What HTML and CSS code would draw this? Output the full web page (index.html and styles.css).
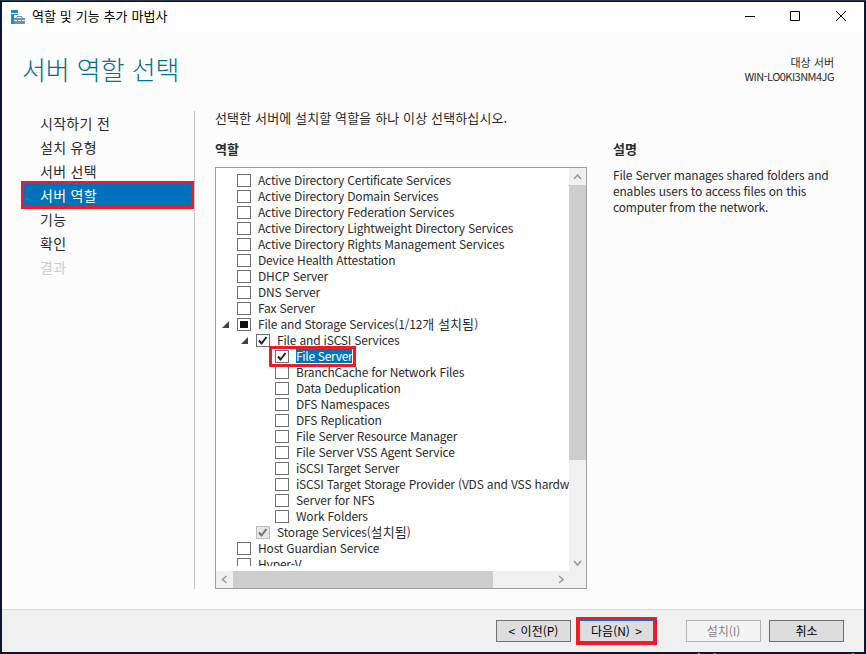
FILE: index.html
```html
<!DOCTYPE html>
<html lang="ko">
<head>
    <meta charset="UTF-8">
    <title>역할 및 기능 추가 마법사</title>
    <link rel="stylesheet" href="styles.css">
</head>
<body>
    <div class="desktop-mark">Windows Server 2016 Standard</div>
    <div class="window">
        <div class="titlebar">
            <svg class="app-icon" width="15" height="14" viewBox="0 0 15 14">
                <path fill="#1f8ad6" d="M0 0h7v3H0zM0 4h7v1H3v9H0z"/>
                <path fill="#7391a5" d="M3 8h11v6H3z"/>
                <path fill="none" stroke="#7391a5" d="M6 8V6.500h5V8"/>
                <path fill="none" stroke="#e4edf3" d="M3 10.500h3M7 10.500h3M11 10.500h3"/>
            </svg>
            <span class="caption">역할 및 기능 추가 마법사</span>
            <svg class="controls" width="102" height="12" viewBox="0 0 102 12" fill="none" stroke="#000">
                <path d="M0 6.500h10M45.500 1.500h9v9h-9z"/>
                <path d="M91 1l10 10M101 1L91 11"/>
            </svg>
        </div>

        <div class="header">
            <h1>서버 역할 선택</h1>
            <div class="target">
                <div>대상 서버</div>
                <div class="host">WIN-LO0KI3NM4JG</div>
            </div>
        </div>

        <div class="content">
            <ul class="steps">
                <li>시작하기 전</li>
                <li>설치 유형</li>
                <li>서버 선택</li>
                <li class="active">서버 역할</li>
                <li>기능</li>
                <li>확인</li>
                <li class="disabled">결과</li>
            </ul>

            <div class="roles">
                <p class="intro">선택한 서버에 설치할 역할을 하나 이상 선택하십시오.</p>
                <h2>역할</h2>
                <div class="listbox">
                    <div class="tree">
                        <div class="row"><i class="check"></i><span>Active Directory Certificate Services</span></div>
                        <div class="row"><i class="check"></i><span>Active Directory Domain Services</span></div>
                        <div class="row"><i class="check"></i><span>Active Directory Federation Services</span></div>
                        <div class="row"><i class="check"></i><span>Active Directory Lightweight Directory Services</span></div>
                        <div class="row"><i class="check"></i><span>Active Directory Rights Management Services</span></div>
                        <div class="row"><i class="check"></i><span>Device Health Attestation</span></div>
                        <div class="row"><i class="check"></i><span>DHCP Server</span></div>
                        <div class="row"><i class="check"></i><span>DNS Server</span></div>
                        <div class="row"><i class="check"></i><span>Fax Server</span></div>
                        <div class="row open"><i class="check partial"></i><span>File and Storage Services(1/12<b>개 설치됨</b>)</span></div>
                        <div class="row level2 open"><i class="check"><svg width="12" height="11" viewBox="0 0 12 11"><path d="M2 5.500l2.500 3L9.500 2"/></svg></i><span>File and iSCSI Services</span></div>
                        <div class="row level3 marked"><i class="check"><svg width="12" height="11" viewBox="0 0 12 11"><path d="M2 5.500l2.500 3L9.500 2"/></svg></i><span class="selected">File Server</span></div>
                        <div class="row level3"><i class="check"></i><span>BranchCache for Network Files</span></div>
                        <div class="row level3"><i class="check"></i><span>Data Deduplication</span></div>
                        <div class="row level3"><i class="check"></i><span>DFS Namespaces</span></div>
                        <div class="row level3"><i class="check"></i><span>DFS Replication</span></div>
                        <div class="row level3"><i class="check"></i><span>File Server Resource Manager</span></div>
                        <div class="row level3"><i class="check"></i><span>File Server VSS Agent Service</span></div>
                        <div class="row level3"><i class="check"></i><span>iSCSI Target Server</span></div>
                        <div class="row level3"><i class="check"></i><span>iSCSI Target Storage Provider (VDS and VSS hardware providers)</span></div>
                        <div class="row level3"><i class="check"></i><span>Server for NFS</span></div>
                        <div class="row level3"><i class="check"></i><span>Work Folders</span></div>
                        <div class="row level2"><i class="check locked"><svg width="12" height="11" viewBox="0 0 12 11"><path d="M2 5.500l2.500 3L9.500 2"/></svg></i><span>Storage Services(<b>설치됨</b>)</span></div>
                        <div class="row"><i class="check"></i><span>Host Guardian Service</span></div>
                        <div class="row"><i class="check"></i><span>Hyper-V</span></div>
                    </div>
                    <div class="vscroll">
                        <svg width="17" height="17" viewBox="0 0 17 17"><path d="M5 11l3.500-4 3.500 4"/></svg>
                        <div class="thumb"></div>
                        <svg width="17" height="17" viewBox="0 0 17 17"><path d="M5 7l3.500 4L12 7"/></svg>
                    </div>
                    <div class="hscroll">
                        <svg width="17" height="17" viewBox="0 0 17 17"><path d="M10.500 5l-4 3.500 4 3.500"/></svg>
                        <div class="thumb"></div>
                        <svg width="17" height="17" viewBox="0 0 17 17"><path d="M7 5l4 3.500L7 12"/></svg>
                    </div>
                    <div class="corner"></div>
                </div>
            </div>

            <div class="description">
                <h2>설명</h2>
                <p>File Server manages shared folders and<br>enables users to access files on this<br>computer from the network.</p>
            </div>
        </div>

        <div class="footer">
            <button>&lt; 이전(P)</button>
            <button class="next">다음(N) &gt;</button>
            <button class="install" disabled>설치(I)</button>
            <button>취소</button>
        </div>
    </div>
</body>
</html>
```

FILE: styles.css
```css
*, *::before, *::after {
    box-sizing: border-box;
}
body {
    margin: 0;
    width: 866px;
    height: 654px;
    padding: 1px 2px 2px;
    overflow: hidden;
    position: relative;
    background-color: #06182f;
    color: #2a2a2a;
    font-family: "Noto Sans CJK KR", sans-serif;
    font-size: 12px;
    border-top: 1px solid #26354c;
}
h1, h2, p, ul {
    margin: 0;
    padding: 0;
}
.desktop-mark {
    position: absolute;
    left: 686px;
    top: 649px;
    color: #fff;
    line-height: 16px;
    letter-spacing: 0.5px;
    white-space: nowrap;
}
.window {
    position: relative;
    width: 862px;
    height: 650px;
    display: flex;
    flex-direction: column;
    background-color: #fcfcfc;
}
.titlebar {
    height: 30px;
    padding: 0 17px 0 9px;
    display: flex;
    align-items: center;
    background-color: #fff;
    color: #000;
}
.app-icon {
    margin-top: -1px;
}
.caption {
    margin: -3px 0 0 6px;
    flex: 1;
    font-size: 13px;
    letter-spacing: 0.1px;
}
.controls {
    margin-top: -2px;
}
.header {
    height: 76px;
    display: flex;
    justify-content: space-between;
    padding: 0 30px 0 20px;
}
h1 {
    margin-top: 17px;
    color: #00708f;
    font-size: 26px;
    line-height: 40px;
    font-weight: 300;
    letter-spacing: -0.1px;
}
.target {
    margin-top: 23px;
    text-align: right;
    font-size: 11px;
    line-height: 14px;
}
.host {
    letter-spacing: -0.53px;
}
.content {
    height: 501px;
    display: flex;
}
.steps {
    width: 193px;
    height: 478px;
    margin-top: 3px;
    border-right: 1px solid #c6c6c6;
    list-style: none;
    font-size: 14px;
    line-height: 24px;
    letter-spacing: 0.3px;
}
.steps li {
    height: 24px;
    padding-left: 38px;
}
.steps .active {
    position: relative;
    z-index: 1;
    width: 173px;
    height: 28px;
    margin: -2px 0 -2px 19px;
    padding-left: 16px;
    border: 3px solid #ed1c24;
    background-color: #0072bc;
    color: #fff;
    line-height: 22px;
}
.steps .disabled {
    color: #ccc;
}
.roles {
    width: 372px;
    margin-left: 20px;
}
.intro {
    font-size: 13px;
    line-height: 20px;
    letter-spacing: 0.13px;
}
h2 {
    font-size: 13px;
    line-height: 20px;
    font-weight: 700;
}
.roles h2 {
    margin-top: 11px;
    margin-bottom: 8px;
}
.listbox {
    height: 422px;
    border: 1px solid #a0a0a0;
    display: grid;
    grid-template-columns: 353px 17px;
    grid-template-rows: 403px 17px;
    background-color: #fff;
}
.tree {
    height: 398px;
    padding-top: 4px;
    overflow: hidden;
    letter-spacing: -0.18px;
}
.row {
    position: relative;
    height: 16px;
    padding-left: 21px;
    display: flex;
    align-items: center;
    line-height: 16px;
    white-space: nowrap;
}
.row span {
    margin-left: 7px;
}
.row b {
    font-size: 13px;
    font-weight: 400;
    line-height: 1;
    letter-spacing: 0.1px;
}
.level2 {
    padding-left: 40px;
}
.level3 {
    padding-left: 59px;
}
.check {
    flex: none;
    width: 14px;
    height: 13px;
    border: 1px solid #707070;
    background-color: #fff;
    display: flex;
}
.check path {
    fill: none;
    stroke: #212121;
    stroke-width: 2;
}
.partial {
    padding: 2px;
    background-color: #111;
    background-clip: content-box;
}
.locked {
    border-color: #bcbcbc;
    background-color: #e6e6e6;
}
.locked path {
    stroke: #707070;
}
/* expander triangle */
.open::before {
    content: "";
    position: absolute;
    left: 6px;
    top: 5px;
    width: 7px;
    height: 7px;
    background-color: #444;
    clip-path: polygon(100% 0, 100% 100%, 0 100%);
}
.level2.open::before {
    left: 25px;
}
.row .selected {
    height: 14px;
    line-height: 14px;
    letter-spacing: -0.3px;
    background-color: #0072bc;
    color: #fff;
}
.marked::after {
    content: "";
    position: absolute;
    z-index: 1;
    left: 53px;
    top: -2px;
    width: 87px;
    height: 21px;
    border: 3px solid #ed1c24;
}
.vscroll, .hscroll {
    display: flex;
    justify-content: space-between;
    background-color: #f0f0f0;
}
.vscroll {
    flex-direction: column;
}
.vscroll svg, .hscroll svg {
    flex: none;
    fill: none;
    stroke: #999;
    stroke-width: 1.6;
}
.thumb {
    background-color: #cdcdcd;
}
.vscroll .thumb {
    height: 275px;
    margin-bottom: auto;
}
.hscroll .thumb {
    width: 260px;
    margin-right: auto;
}
.corner {
    background-color: #f0f0f0;
}
.description {
    margin-left: 26px;
}
.description h2 {
    margin-top: 31px;
}
.description p {
    margin-top: 8px;
    line-height: 16px;
    letter-spacing: -0.18px;
    white-space: nowrap;
}
.footer {
    flex: 1;
    padding: 10px 20px 0 0;
    border-top: 1px solid #dadada;
    display: flex;
    justify-content: flex-end;
    background-color: #f0f0f0;
}
button {
    width: 75px;
    height: 22px;
    margin-left: 8px;
    padding: 0;
    border: 1px solid #707070;
    background-color: #ddd;
    color: #000;
    font-family: inherit;
    font-size: 12px;
    line-height: 18px;
    word-spacing: 2px;
}
.next {
    border-color: #0078d7;
    outline: 3px solid #ed1c24;
}
.install {
    margin-left: 32px;
    border-color: #adb2b5;
    background-color: #f4f4f4;
    color: #838383;
}
```
